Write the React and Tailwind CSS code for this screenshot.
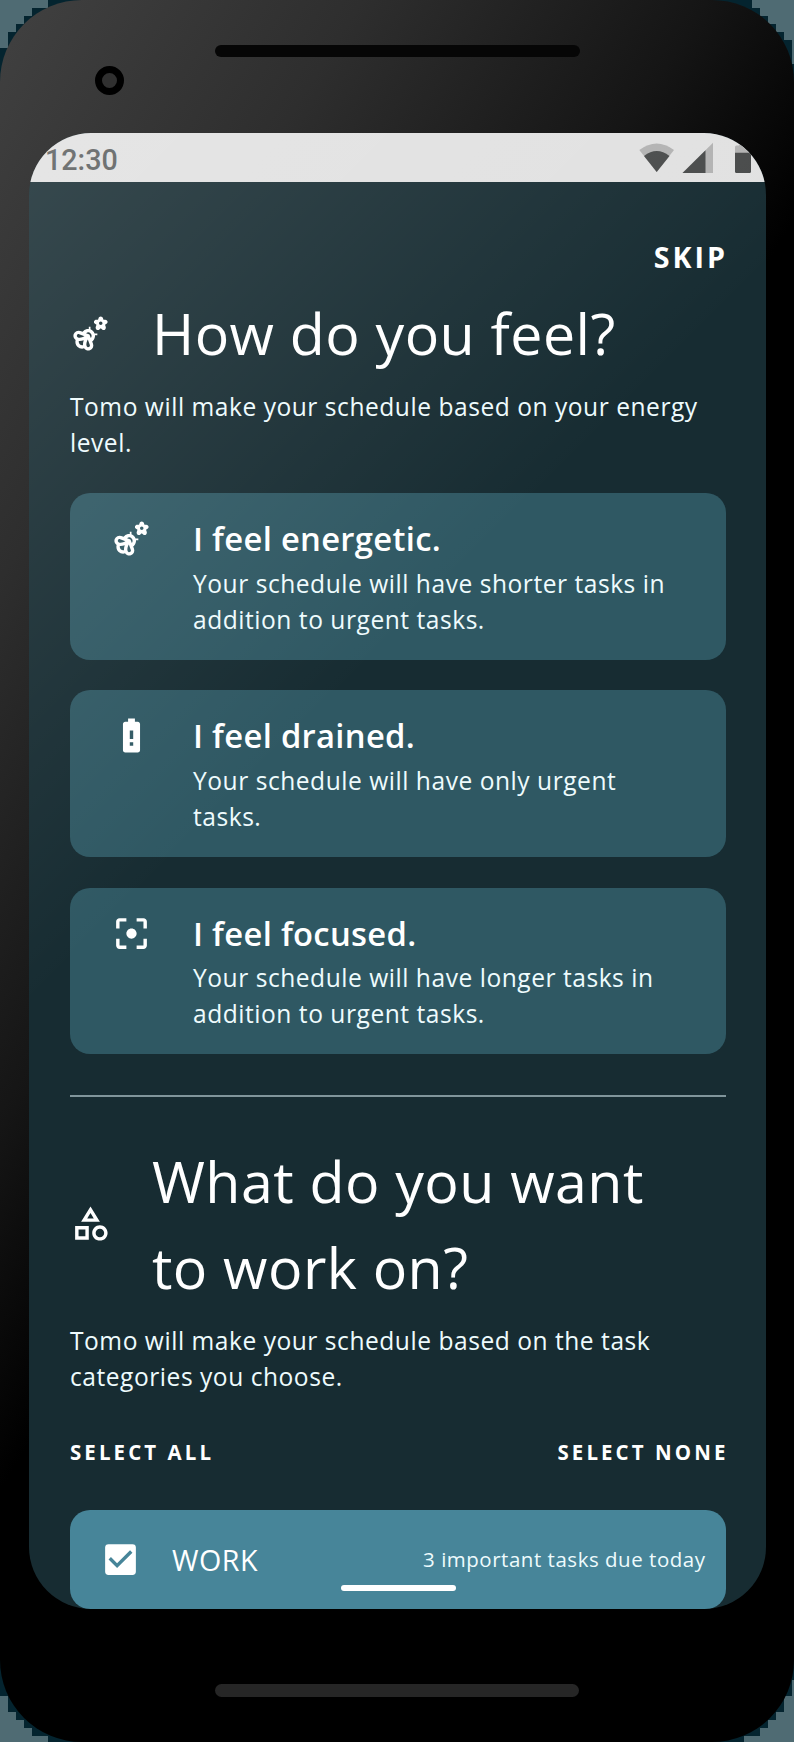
import React from 'react';
import {
  MdOutlineEmojiNature,
  MdBatteryAlert,
  MdFilterCenterFocus,
  MdOutlineCategory,
  MdCheckBox,
} from 'react-icons/md';

const feelings = [
  {
    Icon: MdOutlineEmojiNature,
    title: 'I feel energetic.',
    lines: ['Your schedule will have shorter tasks in', 'addition to urgent tasks.'],
  },
  {
    Icon: MdBatteryAlert,
    title: 'I feel drained.',
    lines: ['Your schedule will have only urgent', 'tasks.'],
  },
  {
    Icon: MdFilterCenterFocus,
    title: 'I feel focused.',
    lines: ['Your schedule will have longer tasks in', 'addition to urgent tasks.'],
  },
];

function Backdrop() {
  return (
    <svg className="absolute inset-0" width="794" height="1742" viewBox="0 0 794 1742" fill="#4f6b73" shapeRendering="crispEdges">
      <rect width="794" height="1742" fill="#04242f" />
      <path d="M0 0H48V8H32V16H24V24H16V32H8V48H0Z" />
      <path d="M794 0H752V8H760V16H768V24H776V32H784V40H792V64H794Z" />
      <path d="M0 1742V1696H8V1712H16V1720H24V1728H32V1736H48V1742Z" />
      <path d="M794 1742V1680H792V1696H784V1712H776V1720H768V1728H760V1736H744V1742Z" />
    </svg>
  );
}

function StatusBar() {
  return (
    <div className="flex h-[49px] items-start justify-between bg-[#e1e1e1] pl-[16px]">
      <span className="mt-[11px] font-['Roboto',sans-serif] text-[28.66px] leading-[32px] font-medium text-[#5c5f5f]">12:30</span>
      <svg className="mt-[9px] mr-[13px]" width="114" height="32" viewBox="638 142 114 32">
        <path d="M638.3 150Q655.7 137 673 150L655.7 172Z" fill="#b2b2b2" />
        <path d="M643 156Q655.7 146.200 668.500 156L655.7 172Z" fill="#484a4a" />
        <path d="M681.500 173L712 142.700V173Z" fill="#b2b2b2" />
        <path d="M681.500 173L704.500 150.200V173Z" fill="#484a4a" />
        <path d="M734 147Q734 145.500 735.500 145.500H738V142H746V145.500H750V153H734Z" fill="#b2b2b2" />
        <path d="M734 152.700H750V171.500Q750 173 748.500 173H735.500Q734 173 734 171.500Z" fill="#484a4a" />
      </svg>
    </div>
  );
}

function Heading({ Icon, lines }) {
  return (
    <div className="flex items-center">
      <Icon className="size-[41px] shrink-0 text-white" />
      <h1 className="ml-[41px] text-[57.3px] leading-[86px] tracking-[0.45px] whitespace-nowrap text-white">
        {lines.map((l) => (
          <span key={l} className="block">{l}</span>
        ))}
      </h1>
    </div>
  );
}

function Body({ lines, className }) {
  return (
    <p className={`text-[24.57px] leading-[36px] tracking-[0.53px] whitespace-nowrap text-[#eefbfd] ${className}`}>
      {lines.map((l) => (
        <span key={l} className="block">{l}</span>
      ))}
    </p>
  );
}

function FeelingCard({ Icon, title, lines }) {
  return (
    <div className="flex h-[166.4px] items-start rounded-[20px] bg-[#2f5863] pl-[40.5px]">
      <Icon className="mt-[25px] size-[41px] shrink-0 text-white" />
      <div className="mt-[21px] ml-[41.5px]">
        <h2 className="text-[32.76px] leading-[49px] font-semibold tracking-[0.31px] text-white">{title}</h2>
        <Body lines={lines} className="mt-[2.6px]" />
      </div>
    </div>
  );
}

export default function App() {
  return (
    <div className="relative h-[1742px] w-[794px] overflow-hidden font-['Open_Sans',sans-serif]">
      <Backdrop />
      <div className="relative flex h-full flex-col rounded-[82px] bg-[linear-gradient(122deg,#414141_0px,#2e2e2e_307px,#151515_600px,#000_790px)]">
        <div className="flex h-[133px] shrink-0 items-start">
          <div className="mt-[66px] ml-[95px] size-[29px] rounded-full border-[7px] border-black bg-[#303030]" />
          <div className="mt-[45px] ml-[91px] h-[12px] w-[364.5px] rounded-full bg-[#060606]" />
        </div>

        <div className="relative ml-[29px] h-[1476px] w-[737px] shrink-0 overflow-hidden rounded-[62px] bg-[#172c32]">
          <StatusBar />
          <div className="flex flex-col pr-[40.5px] pl-[41px]">
            <button className="mt-[54.5px] mr-[-2.5px] self-end text-[28.66px] leading-[40px] font-bold tracking-[3px] text-white">SKIP</button>
            <div className="mt-[13.7px]">
              <Heading Icon={MdOutlineEmojiNature} lines={['How do you feel?']} />
            </div>
            <Body className="mt-[12.4px]" lines={['Tomo will make your schedule based on your energy', 'level.']} />
            <div className="mt-[32.6px] flex flex-col gap-[30.9px]">
              {feelings.map((f) => (
                <FeelingCard key={f.title} {...f} />
              ))}
            </div>
            <div className="mt-[41px] h-[2px] bg-[#80959b]" />
            <div className="mt-[40.5px]">
              <Heading Icon={MdOutlineCategory} lines={['What do you want', 'to work on?']} />
            </div>
            <Body className="mt-[13.3px]" lines={['Tomo will make your schedule based on the task', 'categories you choose.']} />
            <div className="mt-[42.4px] mr-[-3px] flex justify-between text-[20.47px] leading-[30px] font-bold tracking-[3.1px] text-white">
              <button>SELECT ALL</button>
              <button>SELECT NONE</button>
            </div>
            <div className="mt-[42.8px] flex h-[98.7px] items-center rounded-[20px] bg-[#478599] pr-[20px] pl-[30px] text-white">
              <MdCheckBox className="size-[41px] shrink-0" />
              <span className="ml-[31px] text-[28.66px] leading-[43px] tracking-[0.51px]">WORK</span>
              <span className="ml-auto text-[20.47px] leading-[30px] tracking-[0.54px] text-[#eefbfd]">3 important tasks due today</span>
            </div>
          </div>
          <div className="absolute top-[1452px] left-[312px] h-[6px] w-[115px] rounded-full bg-white" />
          <div className="pointer-events-none absolute inset-0 bg-[linear-gradient(135deg,rgba(255,255,255,0.14)_0px,rgba(255,255,255,0)_620px)]" />
        </div>

        <div className="mt-[75px] ml-[215px] h-[13px] w-[364px] rounded-full bg-[#262626]" />
      </div>
    </div>
  );
}
